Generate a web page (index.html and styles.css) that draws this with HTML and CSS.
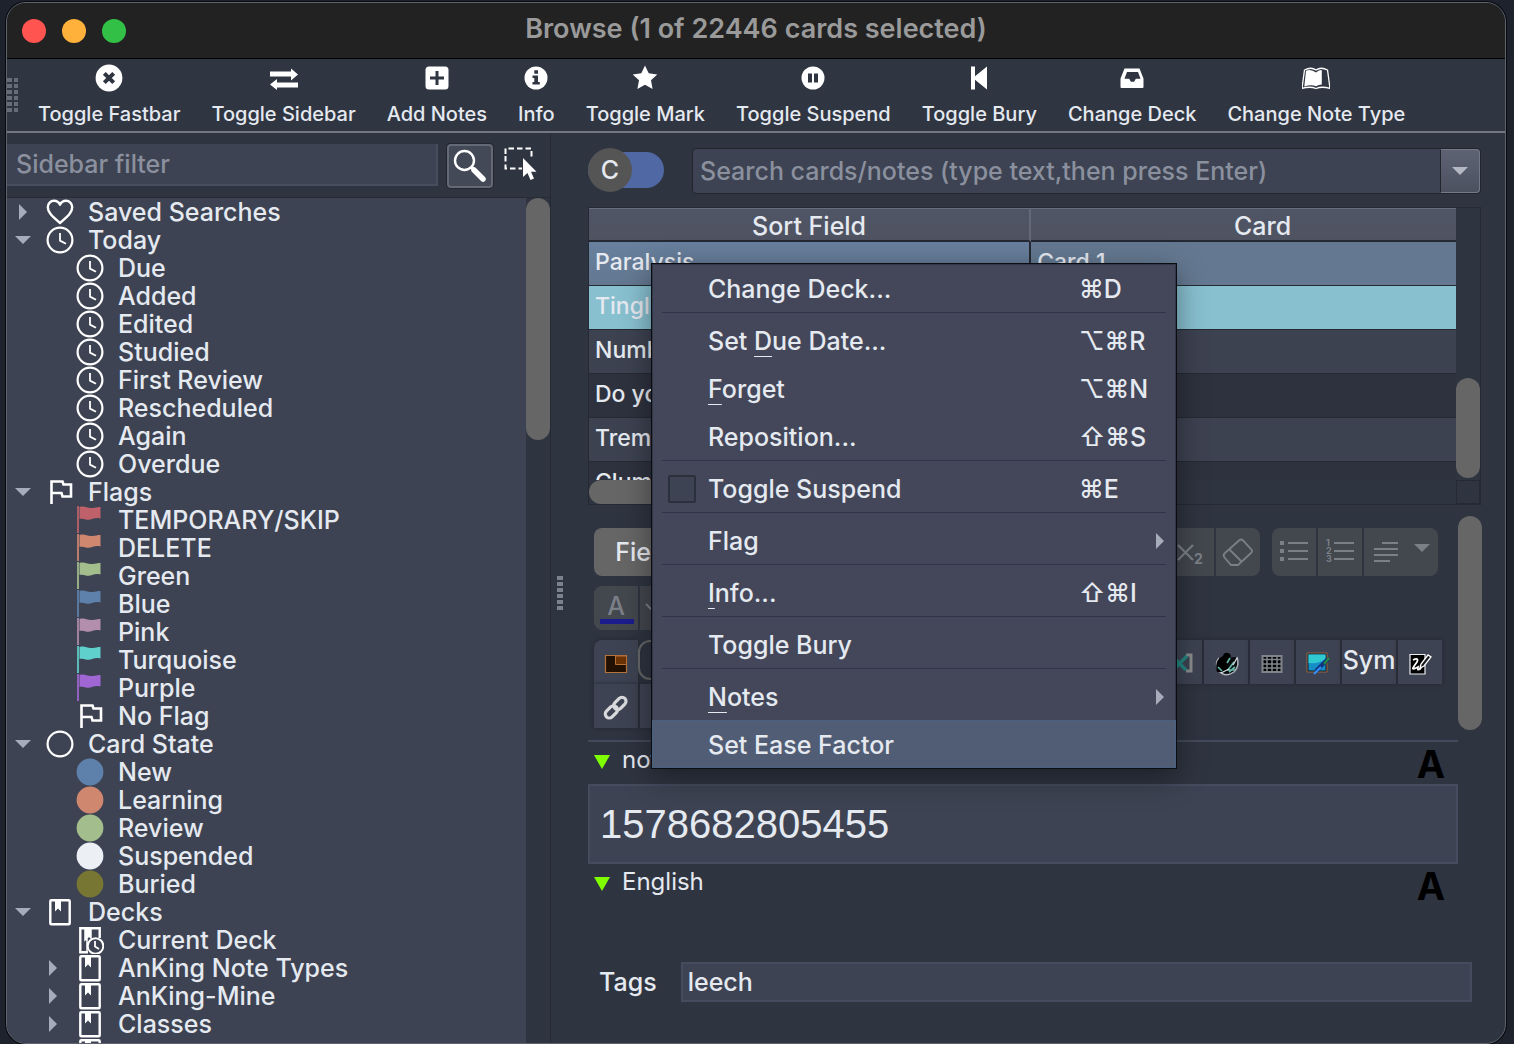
FILE: index.html
```html
<!DOCTYPE html>
<html lang="en">
<head>
<meta charset="utf-8">
<meta name="viewport" content="width=device-width, initial-scale=1">
<title>Browse (1 of 22446 cards selected)</title>
<link rel="stylesheet" href="styles.css">
</head>
<body>
<svg class="defs" width="0" height="0" aria-hidden="true">
  <symbol id="i-clock" viewBox="0 0 28 28"><circle cx="14" cy="14" r="12.4" fill="none" stroke="#fff" stroke-width="2.2"/><path d="M14 7v7.6l6 3.2" fill="none" stroke="#fff" stroke-width="1.8"/></symbol>
  <symbol id="i-heart" viewBox="0 0 28 28"><path d="M14 25C5 17.500 1.800 14 1.800 9.300 1.800 5.400 4.700 2.800 8 2.800c2.500 0 4.800 1.400 6 3.900 1.200-2.500 3.500-3.900 6-3.900 3.300 0 6.200 2.600 6.200 6.500C26.200 14 23 17.500 14 25z" fill="none" stroke="#fff" stroke-width="2.400" stroke-linejoin="round"/></symbol>
  <symbol id="i-flag-o" viewBox="0 0 28 28"><path d="M5.500 26V3.500h11l1 3h7.500v12h-8.500l-1-3.500H5.500" fill="none" stroke="#fff" stroke-width="2.600"/></symbol>
  <symbol id="i-flag" viewBox="0 0 28 28"><path d="M1 0h2v27H1z" fill="currentColor" opacity=".85"/><path d="M3.500 1c6-1.500 7 1.600 13 1 3-.3 5-1 8-1v11.500c-7-1.500-8 2-14 1.200-3-.4-4-1.200-7-.7z" fill="currentColor"/></symbol>
  <symbol id="i-ring" viewBox="0 0 28 28"><circle cx="14" cy="14" r="12.400" fill="none" stroke="#fff" stroke-width="2.200"/></symbol>
  <symbol id="i-dot" viewBox="0 0 28 28"><circle cx="14" cy="14" r="13.400" fill="currentColor"/></symbol>
  <symbol id="i-deck" viewBox="0 0 28 28"><rect x="4.300" y="2.200" width="19.400" height="24" rx="1" fill="none" stroke="#fff" stroke-width="2.400"/><path d="M9 3h6v10.500l-3-3-3 3z" fill="#fff"/></symbol>
  <symbol id="i-deck-now" viewBox="0 0 28 28"><path d="M12 26.200H4.300v-24h19.400V12" fill="none" stroke="#fff" stroke-width="2.400"/><path d="M9 3h6v9l-2-2-4 4zM11 10v16" fill="#fff" stroke="#fff" stroke-width="1.500"/><circle cx="19.500" cy="20" r="7.800" fill="#3d4352" stroke="#fff" stroke-width="2"/><path d="M19 15v5.500l4 2.500" fill="none" stroke="#fff" stroke-width="1.800"/></symbol>
</svg>

<div class="window">
  <header class="titlebar">
    <div class="lights">
      <button class="light red" aria-label="Close"></button>
      <button class="light amber" aria-label="Minimise"></button>
      <button class="light green" aria-label="Zoom"></button>
    </div>
    <h1>Browse (1 of 22446 cards selected)</h1>
  </header>

  <nav class="toolbar" aria-label="Fastbar">
    <span class="grip grip-wide"></span>
    <button class="tool"><svg width="28" height="28" viewBox="0 0 28 28"><circle cx="14" cy="14" r="13.400" fill="#fff"/><path d="M9.300 9.300l9.400 9.400M18.700 9.300l-9.400 9.400" stroke="#2f3541" stroke-width="4"/></svg>Toggle Fastbar</button>
    <button class="tool"><svg width="28" height="28" viewBox="0 0 28 28"><path d="M0 7.500h21V4.500l7 6-7 6v-4H0zM28 23.500H7v2.500l-7-5.500 7-5.500v3.500h21z" fill="#fff"/></svg>Toggle Sidebar</button>
    <button class="tool"><svg width="28" height="28" viewBox="0 0 28 28"><rect x="2.500" y="2.500" width="23" height="23" rx="3.500" fill="#fff"/><path d="M14 7v14M7 14h14" stroke="#2f3541" stroke-width="3"/></svg>Add Notes</button>
    <button class="tool"><svg width="28" height="28" viewBox="0 0 28 28"><circle cx="14" cy="14" r="11.500" fill="#fff"/><path d="M12.300 6.300h3.700v3.400h-3.700zM10.500 11.500H16v6.500h1.800v2.500h-7.300V18h1.800v-4h-1.800z" fill="#2f3541"/></svg>Info</button>
    <button class="tool"><svg width="28" height="28" viewBox="0 0 28 28"><path d="M14 1.500l3.700 7.800 8.600 1.100-6.300 5.900 1.600 8.700L14 20.800 6.400 25 8 16.300l-6.300-5.900 8.600-1.100z" fill="#fff"/></svg>Toggle Mark</button>
    <button class="tool"><svg width="28" height="28" viewBox="0 0 28 28"><circle cx="14" cy="14" r="11.500" fill="#fff"/><path d="M9 9.500h4v9H9zM15 9.500h4v9h-4z" fill="#2f3541"/></svg>Toggle Suspend</button>
    <button class="tool"><svg width="28" height="28" viewBox="0 0 28 28"><path d="M6 2.500h4v9.800L22 2.500v23L10 15.700v9.800H6z" fill="#fff"/></svg>Toggle Bury</button>
    <button class="tool"><svg width="28" height="28" viewBox="0 0 28 28"><path d="M6.500 4.500h15l4 10v8.500q0 1-1 1h-21q-1 0-1-1v-8.500zM9 8l-2.500 6.700h4.700l1.700 3h3.200l1.700-3h4.700L20 8z" fill="#fff" fill-rule="evenodd"/></svg>Change Deck</button>
    <button class="tool"><svg width="28" height="28" viewBox="0 0 28 28"><path d="M2.500 6Q9 2.500 14 6q5-3.500 11.500 0L28 24.500q-8-2.500-14 0-6-2.500-14 0z" fill="none" stroke="#fff" stroke-width="1.300"/><path d="M4 6.800Q9 4.500 14 8.500q3-2.500 5.800-2.400V20.500q-3 0-5.800 1.700Q9 20 2.300 22.500z" fill="#fff"/></svg>Change Note Type</button>
  </nav>

  <div class="body">
    <aside class="sidebar">
      <div class="filter-row">
        <input class="filter" type="text" placeholder="Sidebar filter" aria-label="Sidebar filter">
        <button class="find" aria-label="Search"><svg width="36" height="36" viewBox="0 0 36 36"><circle cx="12.500" cy="12.500" r="9.500" fill="none" stroke="#fff" stroke-width="2.400"/><path d="M19 19l3 3" stroke="#fff" stroke-width="3"/><path d="M22 22l9 9" stroke="#fff" stroke-width="5.500" stroke-linecap="round"/></svg></button>
        <button class="pick" aria-label="Select"><svg width="34" height="34" viewBox="0 0 34 34"><path d="M1.500 7V1.500H27.500V12M1.500 9v12.500H18" fill="none" stroke="#fff" stroke-width="2" stroke-dasharray="5.500 3"/><path d="M19 11v19l4.500-4 3 7 3.500-1.600-3-6.600h5.500z" fill="#fff"/></svg></button>
      </div>
      <div class="tree-wrap">
        <ul class="tree">
          <li><i class="arrow right"></i><svg class="ic"><use href="#i-heart"/></svg>Saved Searches</li>
          <li><i class="arrow down"></i><svg class="ic"><use href="#i-clock"/></svg>Today</li>
          <li class="sub"><i class="arrow"></i><svg class="ic"><use href="#i-clock"/></svg>Due</li>
          <li class="sub"><i class="arrow"></i><svg class="ic"><use href="#i-clock"/></svg>Added</li>
          <li class="sub"><i class="arrow"></i><svg class="ic"><use href="#i-clock"/></svg>Edited</li>
          <li class="sub"><i class="arrow"></i><svg class="ic"><use href="#i-clock"/></svg>Studied</li>
          <li class="sub"><i class="arrow"></i><svg class="ic"><use href="#i-clock"/></svg>First Review</li>
          <li class="sub"><i class="arrow"></i><svg class="ic"><use href="#i-clock"/></svg>Rescheduled</li>
          <li class="sub"><i class="arrow"></i><svg class="ic"><use href="#i-clock"/></svg>Again</li>
          <li class="sub"><i class="arrow"></i><svg class="ic"><use href="#i-clock"/></svg>Overdue</li>
          <li><i class="arrow down"></i><svg class="ic"><use href="#i-flag-o"/></svg>Flags</li>
          <li class="sub"><i class="arrow"></i><svg class="ic c-red"><use href="#i-flag"/></svg>TEMPORARY/SKIP</li>
          <li class="sub"><i class="arrow"></i><svg class="ic c-orange"><use href="#i-flag"/></svg>DELETE</li>
          <li class="sub"><i class="arrow"></i><svg class="ic c-green"><use href="#i-flag"/></svg>Green</li>
          <li class="sub"><i class="arrow"></i><svg class="ic c-blue"><use href="#i-flag"/></svg>Blue</li>
          <li class="sub"><i class="arrow"></i><svg class="ic c-pink"><use href="#i-flag"/></svg>Pink</li>
          <li class="sub"><i class="arrow"></i><svg class="ic c-turquoise"><use href="#i-flag"/></svg>Turquoise</li>
          <li class="sub"><i class="arrow"></i><svg class="ic c-purple"><use href="#i-flag"/></svg>Purple</li>
          <li class="sub"><i class="arrow"></i><svg class="ic"><use href="#i-flag-o"/></svg>No Flag</li>
          <li><i class="arrow down"></i><svg class="ic"><use href="#i-ring"/></svg>Card State</li>
          <li class="sub"><i class="arrow"></i><svg class="ic c-blue"><use href="#i-dot"/></svg>New</li>
          <li class="sub"><i class="arrow"></i><svg class="ic c-orange"><use href="#i-dot"/></svg>Learning</li>
          <li class="sub"><i class="arrow"></i><svg class="ic c-green"><use href="#i-dot"/></svg>Review</li>
          <li class="sub"><i class="arrow"></i><svg class="ic c-white"><use href="#i-dot"/></svg>Suspended</li>
          <li class="sub"><i class="arrow"></i><svg class="ic c-olive"><use href="#i-dot"/></svg>Buried</li>
          <li><i class="arrow down"></i><svg class="ic"><use href="#i-deck"/></svg>Decks</li>
          <li class="sub"><i class="arrow"></i><svg class="ic"><use href="#i-deck-now"/></svg>Current Deck</li>
          <li class="sub"><i class="arrow right"></i><svg class="ic"><use href="#i-deck"/></svg>AnKing Note Types</li>
          <li class="sub"><i class="arrow right"></i><svg class="ic"><use href="#i-deck"/></svg>AnKing-Mine</li>
          <li class="sub"><i class="arrow right"></i><svg class="ic"><use href="#i-deck"/></svg>Classes</li>
          <li class="sub"><i class="arrow"></i><svg class="ic"><use href="#i-deck"/></svg></li>
        </ul>
        <div class="side-scroll"><div class="thumb"></div></div>
      </div>
    </aside>

    <div class="splitter"><span class="grip"></span></div>

    <main class="content">
      <div class="search-row">
        <label class="switch"><input type="checkbox" role="switch" aria-label="Cards or notes"><span class="knob">C</span></label>
        <div class="combo">
          <input type="text" placeholder="Search cards/notes (type text,then press Enter)" aria-label="Search cards/notes">
          <button aria-label="Search history"><i class="caret"></i></button>
        </div>
      </div>

      <div class="grid">
        <div class="grid-view">
          <table>
            <thead><tr><th>Sort Field</th><th>Card</th></tr></thead>
            <tbody>
              <tr class="current"><td>Paralysis</td><td>Card 1</td></tr>
              <tr class="selected"><td>Tingling</td><td></td></tr>
              <tr><td>Numbness</td><td></td></tr>
              <tr><td>Do you</td><td></td></tr>
              <tr><td>Tremor</td><td></td></tr>
              <tr><td>Clumsy</td><td></td></tr>
            </tbody>
          </table>
        </div>
        <div class="vscroll"><div class="thumb"></div></div>
        <div class="hscroll"><div class="thumb"></div></div>
        <div class="corner"></div>
      </div>

      <section class="editor">
        <div class="edit-main">
          <div class="edit-tools">
            <div class="edit-row spread">
              <button class="fields">Fields...</button>
              <div class="groups">
                <div class="group">
                  <button class="flat" aria-label="Subscript"><svg width="44" height="48" viewBox="0 0 44 48"><path d="M8 17l15 15M23 17L8 32" stroke="#7b7f88" stroke-width="2.200"/><text x="24" y="36" class="glyph">2</text></svg></button>
                  <button class="flat" aria-label="Remove formatting"><svg width="44" height="48" viewBox="0 0 44 48"><path d="M9 25L23 12.500q2-2 4 0l8 8.500q2 2 0 4L22 37h-7l-6.500-7.500q-2-2.500.5-4.500zM13 21l13 13" fill="none" stroke="#7b7f88" stroke-width="1.800"/></svg></button>
                </div>
                <div class="group">
                  <button class="flat" aria-label="Unordered list"><svg width="44" height="48" viewBox="0 0 44 48"><path d="M16 15h20M16 23h20M16 31h20" stroke="#7b7f88" stroke-width="2"/><path d="M10 13v4M10 21v4M10 29v4" stroke="#7b7f88" stroke-width="4"/></svg></button>
                  <button class="flat" aria-label="Ordered list"><svg width="44" height="48" viewBox="0 0 44 48"><path d="M16 15h20M16 23h20M16 31h20" stroke="#7b7f88" stroke-width="2"/><text x="8" y="18" class="tiny">1</text><text x="8" y="26" class="tiny">2</text><text x="8" y="34" class="tiny">3</text></svg></button>
                  <button class="flat align" aria-label="Alignment"><svg width="74" height="48" viewBox="0 0 74 48"><path d="M18 15h16M10 21h24M10 27h24M10 33h16" stroke="#7b7f88" stroke-width="2"/><path d="M50 16h16l-8 8z" fill="#7b7f88"/></svg></button>
                </div>
              </div>
            </div>
            <div class="edit-row second">
              <button class="flat color" aria-label="Text colour">A</button>
              <button class="flat" aria-label="Change colour"><svg width="44" height="44" viewBox="0 0 44 44"><path d="M6 18l7 7 7-7" fill="none" stroke="#7b7f88" stroke-width="2"/></svg></button>
            </div>
            <div class="edit-row spread third">
              <div class="addons">
                <button class="addon first" aria-label="Image occlusion"><svg width="44" height="44" viewBox="0 0 44 44"><path d="M11.500 15.500h21v17h-21z" fill="#221103" stroke="#b5713a" stroke-width="1.200"/><path d="M21.500 16h11v8.500h-11z" fill="#6b3306" stroke="#b5713a"/></svg></button>
                <button class="pill" aria-label="Style"></button>
              </div>
              <div class="addons">
                <button class="addon" aria-label="Cloze"><svg width="44" height="44" viewBox="0 0 44 44"><path d="M8 15h-4v16h4M28 15h5v16h-5" fill="none" stroke="#8a8c8e" stroke-width="3"/><path d="M14 16l14 14M29 16L15 30" stroke="#24857f" stroke-width="3.500"/></svg></button>
                <button class="addon" aria-label="Monkey"><svg width="44" height="44" viewBox="0 0 44 44"><path d="M33 17q3 9-3 15-9 6-15-1-5-7 0-13" fill="#0a0d10" stroke="#aeb4ba" stroke-width="1.500"/><path d="M13 32q-3-12 6-16 1-4 5-3 4 1 2 5 1 5-4 8l6 1-4 5z" fill="#000"/><path d="M23 23l3-5M30 22l-6 8h7M25 32l6-5M14 27l4 4" fill="none" stroke="#64b5a7" stroke-width="1.700"/><path d="M33 18l-4 7M17 33l8-4" stroke="#d9dde2" stroke-width="1.300"/></svg></button>
                <button class="addon" aria-label="Table"><svg width="44" height="44" viewBox="0 0 44 44"><path d="M12.500 16h19v16h-19z" fill="#000" stroke="#81858b" stroke-width="2"/><path d="M12 19.500h20M12 24h20M12 28h20M17 17v15M22 17v15M27 17v15" stroke="#81858b" stroke-width="1.500"/></svg></button>
                <button class="addon" aria-label="Edit image"><svg width="44" height="44" viewBox="0 0 44 44"><path d="M11 13h20v19H11z" fill="#061b31" stroke="#9b6740"/><path d="M12.500 14.500h17v16h-17z" fill="#168fc7"/><path d="M12.500 14.500h17V19q-6 5-17 4z" fill="#30c9d0"/><path d="M20 31l12-12" stroke="#10357e" stroke-width="4"/><path d="M18 34l7-7" stroke="#3590ff" stroke-width="2"/><path d="M28 24l5-6" stroke="#278c43" stroke-width="2"/></svg></button>
                <button class="addon sym">Sym</button>
                <button class="addon" aria-label="Sketch"><svg width="44" height="44" viewBox="0 0 44 44"><path d="M12 14.500h15v19.500H12z" fill="#000" stroke="#e9ecf0" stroke-width="1.200"/><path d="M15 20q6-3 4 2-3 4-4 6t5-1q-1 4 2 2l2-3" fill="none" stroke="#fff" stroke-width="1.800"/><path d="M22 28l1-4 7-9 3 2-7 9z" fill="#17191e" stroke="#fff" stroke-width="1.300"/></svg></button>
              </div>
            </div>
            <div class="edit-row addons">
              <button class="addon" aria-label="Link"><svg width="44" height="44" viewBox="0 0 44 44"><g transform="rotate(-45 22 24)" fill="none" stroke="#d8d9da" stroke-width="3.200"><rect x="9" y="19.500" width="14" height="8" rx="4"/><rect x="21" y="19.500" width="14" height="8" rx="4"/></g></svg></button>
              <button class="addon letter">a</button>
            </div>
          </div>

          <div class="field-head"><i class="fold"></i><label for="f-note">note id</label><b class="mark">A</b></div>
          <input id="f-note" class="field" type="text" value="1578682805455">
          <div class="field-head"><i class="fold"></i><span>English</span><b class="mark">A</b></div>
        </div>
        <div class="edit-scroll"><div class="thumb"></div></div>
      </section>

      <div class="tags">
        <label for="tags">Tags</label>
        <input id="tags" type="text" value="leech">
      </div>
    </main>
  </div>

  <div class="menu" role="menu">
    <button role="menuitem"><span>Change Deck...</span><kbd>⌘D</kbd></button>
    <hr>
    <button role="menuitem"><span>Set <u>D</u>ue Date...</span><kbd>⌥⌘R</kbd></button>
    <button role="menuitem"><span><u>F</u>orget</span><kbd>⌥⌘N</kbd></button>
    <button role="menuitem"><span>Reposition...</span><kbd>⇧⌘S</kbd></button>
    <hr>
    <label class="check"><input type="checkbox"><span>Toggle Suspend</span><kbd>⌘E</kbd></label>
    <hr>
    <button role="menuitem"><span>Flag</span><i class="arrow right"></i></button>
    <hr>
    <button role="menuitem"><span><u>I</u>nfo...</span><kbd>⇧⌘I</kbd></button>
    <hr>
    <button role="menuitem"><span>Toggle Bury</span></button>
    <hr>
    <button role="menuitem"><span><u>N</u>otes</span><i class="arrow right"></i></button>
    <button role="menuitem" class="hot"><span>Set Ease Factor</span></button>
  </div>
</div>
</body>
</html>
```
FILE: styles.css
```css
* { box-sizing: border-box; }

body {
  margin: 0;
  height: 100vh;
  padding: 2px 8px 0 6px;
  overflow: hidden;
  background: #1e222d;
  color: #e5e9f0;
  font: 500 25px/28px Inter, "Liberation Sans", sans-serif;
}

button, input {
  margin: 0;
  padding: 0;
  border: 0;
  background: none;
  color: inherit;
  font: inherit;
  outline: 0;
}
input { min-width: 0; }
input::placeholder { color: #8b909e; opacity: 1; }
svg { display: block; flex: none; }
.defs { position: absolute; }

.window {
  position: relative;
  display: flex;
  flex-direction: column;
  height: 100%;
  overflow: hidden;
  border: 1px solid #60646e;
  border-radius: 20px;
  background: #2e3440;
  box-shadow: 0 0 0 1px #08090d;
}

/* Title bar */
.titlebar {
  flex: none;
  display: grid;
  grid-template-columns: 1fr auto 1fr;
  align-items: center;
  height: 56px;
  padding: 0 15px;
  border-bottom: 1px solid #000;
  background: #222;
}
.titlebar h1 { margin: 0; padding-bottom: 3px; color: #9a9a9a; font-size: 27px; font-weight: 600; }
.lights { display: flex; gap: 16px; }
.light { width: 24px; height: 24px; border-radius: 50%; }
.red { background: #ff544f; }
.amber { background: #ffb13b; }
.green { background: #32c146; }

/* Fastbar */
.toolbar {
  flex: none;
  display: flex;
  align-items: flex-start;
  gap: 31px;
  height: 74px;
  padding: 5px 0 0;
  border-bottom: 2px solid #727783;
  background: #2f3541;
}
.tool {
  display: flex;
  flex-direction: column;
  align-items: center;
  gap: 8px;
  font-size: 20px;
  line-height: 28px;
  white-space: nowrap;
}
.grip {
  width: 6px;
  height: 36px;
  background: repeating-linear-gradient(#7c828d 0 4px, transparent 4px 6px);
}
.grip-wide {
  width: 12px;
  margin: 14px -12px 0 0;
  background:
    linear-gradient(90deg, transparent 5px, #2f3541 5px 7px, transparent 7px 11px, #2f3541 11px),
    repeating-linear-gradient(#666c78 0 4px, transparent 4px 6px);
}

.body { flex: 1; display: flex; min-height: 0; }

/* Sidebar */
.sidebar {
  flex: none;
  display: flex;
  flex-direction: column;
  width: 544px;
  border-right: 1px solid #242934;
}
.filter-row { display: flex; align-items: flex-start; padding: 11px 12px 9px 0; }
.filter {
  flex: 1;
  height: 42px;
  margin-right: 9px;
  padding: 0 9px;
  border-right: 2px solid #464d5d;
  border-bottom: 2px solid #464d5d;
  background: #3d4352;
}
.find {
  display: grid;
  place-items: center;
  width: 46px;
  height: 44px;
  margin-right: 11px;
  border: 2px solid #646976;
  border-radius: 4px;
  background: #434956;
  box-shadow: 0 0 0 1px #22262f;
}
.pick { margin: 3px 0 0; }
.tree-wrap { flex: 1; display: flex; min-height: 0; border-top: 1px solid #252a34; }
.tree {
  flex: 1;
  margin: 0;
  padding: 0;
  overflow: hidden;
  list-style: none;
  background: #3d4352;
}
.tree li { display: flex; align-items: center; height: 28px; padding-left: 8px; white-space: nowrap; }
.tree .sub { padding-left: 38px; }
.ic { width: 28px; height: 28px; margin: 0 14px 0 15px; }
.arrow { flex: none; width: 16px; height: 16px; }
.arrow::before { content: ""; display: block; background: #a6acb9; }
.right::before { width: 8px; height: 16px; margin-left: 4px; clip-path: polygon(0 0, 100% 50%, 0 100%); }
.down::before { width: 16px; height: 8px; margin-top: 4px; clip-path: polygon(0 0, 100% 0, 50% 100%); }
.c-red { color: #bf616a; }
.c-orange { color: #d08770; }
.c-green { color: #a3be8c; }
.c-blue { color: #5e81ac; }
.c-pink { color: #b48ead; }
.c-turquoise { color: #5fd0cb; }
.c-purple { color: #a066d3; }
.c-white { color: #eceff4; }
.c-olive { color: #777733; }

.thumb { border-radius: 12px; background: #666; }
.side-scroll { width: 24px; }
.side-scroll .thumb { height: 242px; }
.splitter { flex: none; display: grid; place-items: center; width: 18px; padding-top: 12px; }

/* Main pane */
.content { flex: 1; min-width: 0; padding: 15px 24px 0 19px; }
.search-row { display: flex; gap: 28px; height: 46px; }
.switch {
  flex: none;
  width: 76px;
  height: 36px;
  margin-top: 4px;
  border-radius: 18px;
  background: #5069a4;
}
.switch input { position: absolute; opacity: 0; }
.knob {
  display: grid;
  place-items: center;
  width: 44px;
  height: 44px;
  margin-top: -4px;
  border-radius: 50%;
  background: #555;
}
.combo {
  flex: 1;
  display: flex;
  min-width: 0;
  border: 1px solid #20252e;
  border-radius: 4px;
  background: #3d4352;
}
.combo input { flex: 1; padding: 0 7px; }
.combo button {
  display: grid;
  place-items: center;
  width: 40px;
  border: 1px solid #737987;
  border-left-color: #20252e;
  border-radius: 0 4px 4px 0;
  background: linear-gradient(#5d6373, #4c5160);
}
.caret { width: 16px; height: 8px; background: #b3b8c2; clip-path: polygon(0 0, 100% 0, 50% 100%); }

/* Card list */
.grid {
  display: grid;
  grid-template: 272px 24px / 1fr 24px;
  margin-top: 13px;
  border: 1px solid #242933;
}
.grid-view { overflow: hidden; }
table { width: 100%; table-layout: fixed; border-collapse: separate; border-spacing: 0; }
th {
  width: 49%;
  height: 34px;
  padding: 2px 0 0;
  border-top: 1px solid #696e7b;
  border-bottom: 2px solid #242933;
  background: linear-gradient(#4f5566, #4f5361);
  font-weight: 500;
}
th:first-child { width: 51%; border-right: 2px solid #646977; }
th:last-child { padding-left: 38px; }
td {
  height: 44px;
  padding: 0 6px 4px;
  border-bottom: 1px solid #242933;
  font-size: 23px;
}
tr:nth-child(odd) td { background: #3d4251; }
tr:nth-child(even) td { background: #2e323e; }
tr.current td { background: #647991; }
tr.current td:first-child { border-right: 2px solid #242933; background: linear-gradient(#68809e, #637890); }
tr.selected td { background: #88c0d0; }
.vscroll { padding-top: 170px; }
.vscroll .thumb { height: 100px; }
.hscroll .thumb { width: 50%; height: 24px; }
.corner { border: 1px solid #242933; }

/* Editor */
.editor { display: flex; margin-top: 11px; }
.edit-main { flex: 1; min-width: 0; }
.edit-scroll { width: 24px; margin-right: -1px; }
.edit-scroll .thumb { height: 214px; }
.edit-tools {
  padding: 12px 16px 12px 6px;
  border-bottom: 2px solid #434a5b;
}
.edit-row { display: flex; }
.spread { justify-content: space-between; }
.fields {
  width: 136px;
  height: 48px;
  border-radius: 8px;
  background: #666;
}
.groups { display: flex; gap: 12px; margin-right: 4px; }
.group { display: flex; gap: 2px; overflow: hidden; border-radius: 8px; }
.flat { display: grid; place-items: center; background: #43474e; color: #7b7f88; }
.glyph { fill: #7b7f88; font-size: 14px; font-weight: 700; }
.tiny { fill: #7b7f88; font-size: 9px; font-weight: 700; }
.second { gap: 2px; margin: 10px 0; }
.second .flat { width: 44px; height: 44px; }
.second .color {
  position: relative;
  padding-bottom: 4px;
  border-radius: 8px 0 0 8px;
}
.color::after {
  content: "";
  position: absolute;
  inset: auto 4px 6px 6px;
  height: 5px;
  background: #1c1c8c;
}
.addons { display: flex; gap: 2px; }
.addon {
  display: grid;
  place-items: center;
  min-width: 44px;
  height: 44px;
  background: #3d4352;
  box-shadow: 0 0 4px #232832;
}
.addon.first { border-radius: 8px 0 0 0; }
.sym { width: 54px; padding-bottom: 4px; }
.letter { font-weight: 700; }
.pill { width: 120px; height: 40px; margin-left: -2px; border: 2px solid #666; border-radius: 12px; }

.field-head { display: flex; align-items: center; height: 42px; padding: 0 13px 6px 6px; font-size: 24px; font-weight: 400; }
.fold { width: 16px; height: 14px; margin: 4px 12px 0 0; background: #7fff00; clip-path: polygon(0 0, 100% 0, 50% 100%); }
.mark { margin: 8px 0 0 auto; color: #000; font-size: 38px; }
.field {
  display: block;
  width: 100%;
  height: 80px;
  padding: 0 10px;
  border: 2px solid #444c5e;
  background: #3d4352;
  font: 40px "Liberation Sans", Arial, sans-serif;
}
.tags { display: flex; align-items: center; gap: 24px; margin: 56px 9px 0 11px; }
.tags input { flex: 1; height: 40px; padding: 0 5px; border: 2px solid #444c5e; background: #3d4352; }

/* Context menu */
.menu {
  position: absolute;
  left: 644px;
  top: 260px;
  width: 526px;
  border: 1px solid #0b0d12;
  background: #434759;
  box-shadow: 0 8px 28px rgba(0, 0, 0, .4), inset 0 0 0 1px #303746;
}
.menu button, .check {
  display: grid;
  grid-template-columns: 371px 1fr;
  align-items: center;
  width: 100%;
  height: 48px;
  padding: 2px 8px 0 56px;
  text-align: left;
}
.menu hr { height: 4px; margin: 0 10px; border: 0; border-top: 1px solid #30364a; }
.menu kbd { font: inherit; }
.menu u { text-decoration-thickness: 1px; text-underline-offset: 6px; text-decoration-skip-ink: none; }
.menu .arrow { justify-self: end; }
.menu .check { grid-template-columns: 40px 371px 1fr; padding-left: 16px; }
.check input { width: 28px; height: 28px; border: 2px solid #2a303c; border-radius: 2px; background: #3d4352; appearance: none; }
.menu .hot { background: #515d74; box-shadow: inset 0 0 0 1px #4b6180; }
```
